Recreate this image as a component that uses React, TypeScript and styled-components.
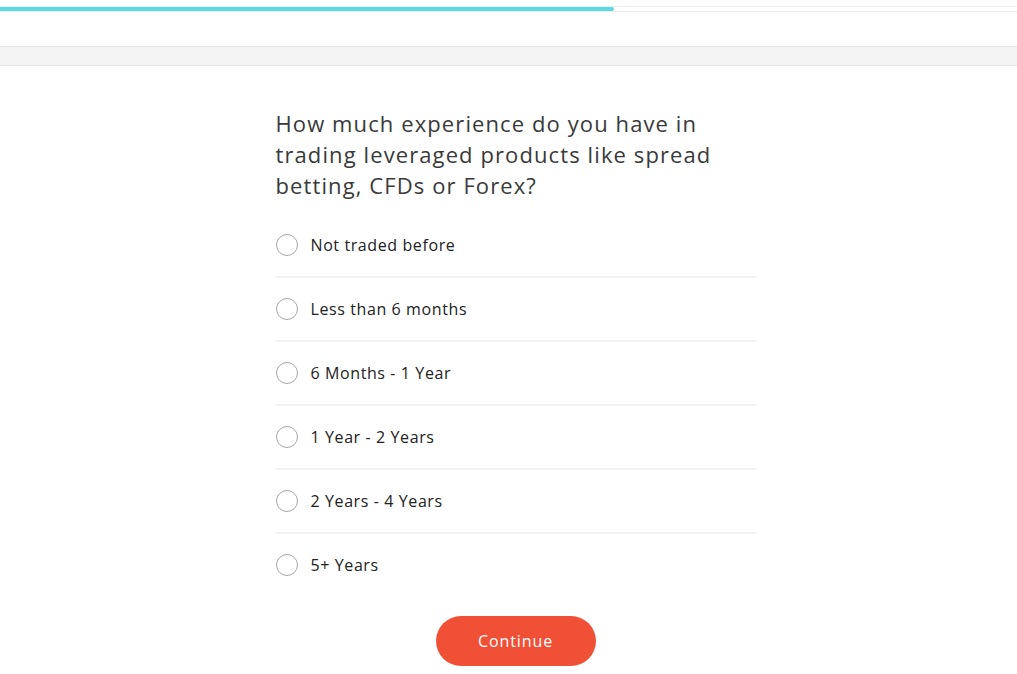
import styled, { createGlobalStyle } from "styled-components";

const GlobalStyle = createGlobalStyle`
  html, body {
    margin: 0;
    padding: 0;
    background: #ffffff;
  }
  body {
    font-family: "Open Sans", "Liberation Sans", sans-serif;
    color: #333333;
  }
`;

const Page = styled.div`
  display: flex;
  flex-direction: column;
  min-height: 674px;
  padding-top: 6px;
  box-sizing: border-box;
`;

const ProgressTrack = styled.div`
  height: 4px;
  border-top: 1px solid #ececec;
  border-bottom: 1px solid #ececec;
  background: #ffffff;
`;

const ProgressFill = styled.div`
  height: 100%;
  background: #5dd9e6;
  border-radius: 0 2px 2px 0;
`;

const SubBar = styled.div`
  margin-top: 34px;
  height: 18px;
  background: #f4f4f4;
  border-top: 1px solid #e8e8e8;
  border-bottom: 1px solid #e8e8e8;
`;

const Content = styled.main`
  width: 480px;
  margin-left: calc((100% - 480px) / 2 + 7px);
  padding-top: 42px;
  display: flex;
  flex-direction: column;
`;

const Question = styled.h1`
  margin: 0 0 13px;
  font-size: 22px;
  font-weight: 400;
  line-height: 31px;
  letter-spacing: 1.1px;
  color: #3a3a3a;
`;

const OptionList = styled.div`
  display: flex;
  flex-direction: column;
`;

const Option = styled.label<{ last?: boolean }>`
  display: flex;
  align-items: center;
  gap: 13px;
  height: 62px;
  border-bottom: 2px solid ${(p) => (p.last ? "transparent" : "#f2f2f2")};
  cursor: pointer;
  font-size: 16px;
  letter-spacing: 0.6px;
  color: #222222;
`;

const Radio = styled.span`
  width: 20px;
  height: 20px;
  border-radius: 50%;
  border: 1px solid #a8a8a8;
  flex-shrink: 0;
`;

const ButtonRow = styled.div`
  display: flex;
  justify-content: center;
  margin-top: 18px;
`;

const ContinueButton = styled.button`
  width: 160px;
  height: 50px;
  border: none;
  border-radius: 25px;
  background: #f05036;
  color: #ffffff;
  font-family: inherit;
  font-size: 16px;
  letter-spacing: 0.9px;
  cursor: pointer;
`;

const options = [
  "Not traded before",
  "Less than 6 months",
  "6 Months - 1 Year",
  "1 Year - 2 Years",
  "2 Years - 4 Years",
  "5+ Years",
];

export default function App() {
  const progress = 614 / 1017;
  return (
    <>
      <GlobalStyle />
      <Page>
        <ProgressTrack>
          <ProgressFill style={{ width: `${progress * 100}%` }} />
        </ProgressTrack>
        <SubBar />
        <Content>
          <Question>
            How much experience do you have in trading leveraged products like
            spread betting, CFDs or Forex?
          </Question>
          <OptionList>
            {options.map((o, i) => (
              <Option key={o} last={i === options.length - 1}>
                <Radio />
                {o}
              </Option>
            ))}
          </OptionList>
          <ButtonRow>
            <ContinueButton>Continue</ContinueButton>
          </ButtonRow>
        </Content>
      </Page>
    </>
  );
}
